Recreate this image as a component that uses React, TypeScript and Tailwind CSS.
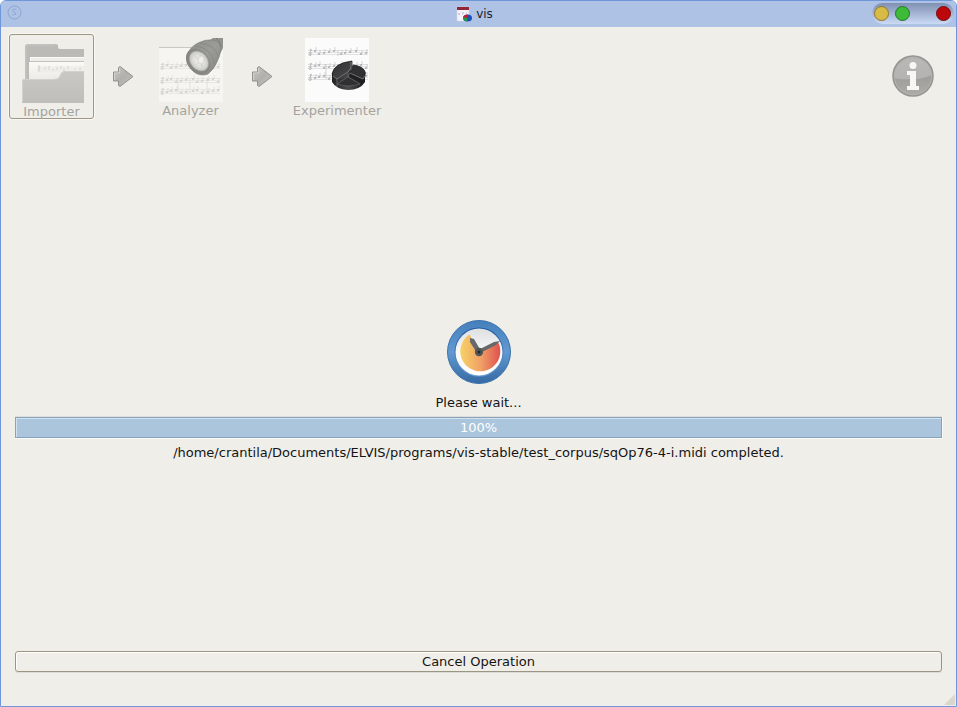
import type { ReactNode } from "react";

function AppIcon() {
  return (
    <svg width="16" height="16" viewBox="0 0 16 16" aria-hidden="true">
      <rect x="1" y="1" width="12" height="14" fill="#f4f2f8" stroke="#d5d3e0" strokeWidth=".5" />
      <rect x="1" y="1" width="12" height="3" fill="#922536" />
      <path d="M3 7v2M3 8h1M6 8h1M7 6v2M10 7h1" stroke="#b9b6c6" strokeWidth="1" />
      <ellipse cx="11.500" cy="12" rx="4.500" ry="3.500" fill="#1c50b8" />
      <path d="M11.500 12 7 11.500Q8 8.500 12 8.500z" fill="#d0182c" />
      <path d="M11.500 12 11 15.500Q7 15 7 11.500z" fill="#1e9a48" />
    </svg>
  );
}

function StaffLines({ dark }: { dark: boolean }) {
  const ink = dark ? "#77777a" : "#a3a29e";
  const notes = [10, 14, 19, 24, 29, 36, 40, 45, 51, 56, 61];
  return (
    <g opacity={dark ? 0.55 : 0.45}>
      {[12, 26, 37].map((y, row) => (
        <g key={y}>
          {[0, 2, 4].map((d) => (
            <path key={d} d={`M3 ${y + d}.5H63`} stroke={ink} strokeWidth=".35" />
          ))}
          <path
            d={`M5 ${y + 6}c2-1 0-4-1-2s3 2 2-1-1-4 0-4 0 3-2 4`}
            fill="none"
            stroke={ink}
            strokeWidth=".8"
          />
          {notes.map((x, i) => (
            <g key={x} fill={ink}>
              <ellipse cx={x} cy={y + 1 + ((i * 3 + row) % 4)} rx="1.2" ry=".9" />
              <path d={`M${x + 1} ${y + 1 + ((i * 3 + row) % 4)}v-4`} stroke={ink} strokeWidth=".5" />
            </g>
          ))}
        </g>
      ))}
      <path d="M21 26v15M33 12v6M33 26v15M50 26v15" stroke={ink} strokeWidth=".5" />
    </g>
  );
}

function FolderIcon() {
  return (
    <svg className="shrink-0" width="64" height="64" viewBox="0 0 64 64" aria-hidden="true">
      <defs>
        <linearGradient id="folderFront" x1="0" y1="0" x2="0" y2="1">
          <stop offset="0" stopColor="#c9c8c4" />
          <stop offset="1" stopColor="#bfbebb" />
        </linearGradient>
        <linearGradient id="folderPaper" x1="0" y1="0" x2="0" y2="1">
          <stop offset="0" stopColor="#fbfaf7" />
          <stop offset="1" stopColor="#e9e8e4" />
        </linearGradient>
      </defs>
      <path d="M5 42V8q0-3 3-3h28q2 0 2 2v1q0 2 3 2h23v32z" fill="#bbbab6" />
      <path d="M6 42V8q0-2 2-2h27" fill="none" stroke="#c9c8c4" />
      <path d="M10 18h54v4H10z" fill="#eeede9" />
      <path d="M10.500 22v-3.500H64" fill="none" stroke="#fcfbf9" />
      <path d="M9 23h55v20H9z" fill="url(#folderPaper)" />
      <path d="M10 22.500h54" stroke="#c7c6c2" strokeWidth=".7" />
      <path d="M17 28h47M17 30h47M17 32h47" stroke="#e0dfdb" strokeWidth=".5" />
      <path
        d="M19 26v7M18 31q3-2 1-4M25 28v3M29 27v4M33 30v2M37 28v3M41 27v3M44 29v3M48 27v3M55 29v2M60 28v3"
        fill="none"
        stroke="#d2d1cd"
        strokeWidth=".9"
      />
      <path d="M2 64V42q0-2 2-2h31q4 0 5-4t6-4h18v32z" fill="url(#folderFront)" />
      <path d="M2.500 63V42q0-1.500 2-1.500h30q5 0 6-4t6-4h17" fill="none" stroke="#d2d1cd" />
    </svg>
  );
}

function FlashlightIcon() {
  return (
    <svg className="shrink-0" width="64" height="64" viewBox="0 0 64 64" aria-hidden="true">
      <defs>
        <linearGradient id="torchBody" x1="0" y1="0" x2="1" y2="1">
          <stop offset="0" stopColor="#8c8c88" />
          <stop offset=".5" stopColor="#9b9b97" />
          <stop offset="1" stopColor="#83837f" />
        </linearGradient>
        <radialGradient id="torchLens">
          <stop offset="0" stopColor="#f1f0ed" />
          <stop offset=".6" stopColor="#dfdeda" />
          <stop offset="1" stopColor="#c4c4c0" />
        </radialGradient>
      </defs>
      <path d="M0 9h64v55H0z" fill="#f6f5f1" />
      <path d="M0 9.500h64" stroke="#c9c8c5" />
      <g transform="translate(-2 14)">
        <StaffLines dark={false} />
      </g>
      <path d="M51 2 54 0h10v10l-4 8z" fill="#92928e" />
      <path d="M57 0q4 3 5 9" fill="none" stroke="#7d7d79" />
      <path
        d="M28 17Q31 9 39 5q8-4 15-3 7 2 8 8-1 8-4 14-3 7-9 12-9 3-15-3-7-8-6-16z"
        fill="url(#torchBody)"
        stroke="#81817d"
        strokeWidth=".7"
      />
      <path d="M36 8q16 1 20 19M41 5q14 1 19 14" fill="none" stroke="#848480" strokeWidth=".7" />
      <ellipse cx="39" cy="23.500" rx="10.500" ry="14" transform="rotate(-40 39 23.500)" fill="#868682" />
      <ellipse cx="40" cy="23" rx="8.500" ry="11" transform="rotate(-40 40 23)" fill="url(#torchLens)" stroke="#a4a4a0" strokeWidth=".7" />
      <path d="m35 17 10 12M37 27l8-8M41 16l2 14" stroke="#cbcac7" strokeWidth=".7" />
      <ellipse cx="42" cy="22" rx="3" ry="4" fill="#efeeeb" stroke="#d0cfcc" strokeWidth=".7" />
    </svg>
  );
}

function ChartIcon() {
  return (
    <svg className="shrink-0" width="64" height="64" viewBox="0 0 64 64" aria-hidden="true">
      <defs>
        <linearGradient id="pieSide" x1="0" y1="0" x2="1" y2="0">
          <stop offset="0" stopColor="#222224" />
          <stop offset=".5" stopColor="#4b4b4d" />
          <stop offset="1" stopColor="#19191b" />
        </linearGradient>
        <linearGradient id="pieTop" x1="0" y1="0" x2="1" y2="1">
          <stop offset="0" stopColor="#303032" />
          <stop offset="1" stopColor="#4a4a4c" />
        </linearGradient>
      </defs>
      <rect width="64" height="64" fill="#fbfbfb" />
      <StaffLines dark />
      <path d="M27 35v9q4 7 16 8 12 0 17-8v-9L45 32z" fill="url(#pieSide)" />
      <path d="M27 36Q29 25 47 23v7l-3 4-12 7q-4-2-5-5z" fill="url(#pieTop)" stroke="#19191b" strokeWidth=".7" />
      <path d="M48 27q11 1 12.500 8-.5 4-2.500 6l-13-6 2-4z" fill="#303032" stroke="#19191b" strokeWidth=".7" />
      <path d="m45 35 13 6v5l-14-7z" fill="#202022" />
      <path d="M43 35v4l12 7q-12 4-23 0l11-7" fill="#303032" stroke="#6f6f72" strokeWidth=".6" />
      <path d="M32 41v7" stroke="#77777a" strokeWidth=".7" />
      <path d="m28 38 4 3 11-7 3-4V24M45 35l13 6 2-3" fill="none" stroke="#99999c" strokeWidth=".7" />
    </svg>
  );
}

function StepArrow() {
  return (
    <div className="flex h-[85px] w-[54px] shrink-0 items-center justify-center">
      <svg width="26" height="24" viewBox="0 0 26 24" aria-hidden="true">
        <defs>
          <linearGradient id="arrowFill" x1="0" y1="0" x2="1" y2="1">
            <stop offset="0" stopColor="#c9c8c5" />
            <stop offset=".5" stopColor="#b1b0ad" />
            <stop offset="1" stopColor="#c2c1be" />
          </linearGradient>
        </defs>
        <path
          d="M5.500 7h5V2.500l1.500-1L25 11.500 12 21.500l-1.500-1V16h-5z"
          fill="url(#arrowFill)"
          stroke="#92918e"
          strokeWidth="1"
          strokeLinejoin="round"
        />
        <path d="M6.500 15V8h5V3" fill="none" stroke="#d8d7d4" strokeWidth=".8" />
      </svg>
    </div>
  );
}

function InfoIcon() {
  return (
    <svg width="42" height="42" viewBox="0 0 42 42" aria-hidden="true">
      <defs>
        <linearGradient id="infoFill" x1="0" y1="0" x2="0" y2="1">
          <stop offset="0" stopColor="#aaa9a6" />
          <stop offset=".55" stopColor="#a09f9c" />
          <stop offset="1" stopColor="#adaca9" />
        </linearGradient>
      </defs>
      <circle cx="21" cy="21" r="20" fill="url(#infoFill)" stroke="#959491" strokeWidth="1.500" />
      <path d="M2.500 23A18.500 18.500 0 1 1 39.500 20Q29 25 18 24 8 25 2.500 23z" fill="#c6c5c2" opacity=".55" />
      <circle cx="21" cy="21" r="18.700" fill="none" stroke="#b8b7b4" strokeWidth=".7" />
      <circle cx="21" cy="10.500" r="3.500" fill="#f8f7f4" />
      <path d="M15 16h9v15h3v4H15v-4h3V20h-3z" fill="#f8f7f4" />
    </svg>
  );
}

function ClockIcon() {
  return (
    <svg width="64" height="64" viewBox="0 0 64 64" aria-hidden="true">
      <defs>
        <linearGradient id="clockRim" x1="0" y1="0" x2="0" y2="1">
          <stop offset="0" stopColor="#4480bd" />
          <stop offset=".5" stopColor="#6299d0" />
          <stop offset="1" stopColor="#3469a4" />
        </linearGradient>
        <linearGradient id="clockInner" x1="0" y1="0" x2="0" y2="1">
          <stop offset="0" stopColor="#1d57a0" />
          <stop offset="1" stopColor="#6a9ed2" />
        </linearGradient>
        <linearGradient id="clockTime" x1="0" y1="0" x2="1" y2="0">
          <stop offset="0" stopColor="#f7d264" />
          <stop offset=".5" stopColor="#f0a267" />
          <stop offset="1" stopColor="#df504f" />
        </linearGradient>
        <linearGradient id="clockFace" x1="0" y1="0" x2="0" y2="1">
          <stop offset="0" stopColor="#dedfe1" />
          <stop offset=".5" stopColor="#f8f8f9" />
          <stop offset="1" stopColor="#ffffff" />
        </linearGradient>
      </defs>
      <circle cx="32" cy="32" r="31.500" fill="url(#clockRim)" stroke="#3c73ad" />
      <circle cx="32" cy="32" r="24.500" fill="url(#clockInner)" />
      <circle cx="32" cy="32" r="23.500" fill="url(#clockFace)" />
      <path d="M32 32 51 22A20 20 0 1 1 22.500 14.500z" fill="url(#clockTime)" />
      <path d="m23 18 4 1 7 12-4 2-7-11z" fill="#65696a" />
      <path d="m31 30 16-8 6-1-4 4-16 8z" fill="#65696a" />
      <circle cx="32" cy="32" r="4.200" fill="#525657" />
      <circle cx="32" cy="32" r="1.500" fill="#242829" />
    </svg>
  );
}

function ToolButton({ label, size, children }: { label: string; size: string; children: ReactNode }) {
  return (
    <button
      disabled
      className={`flex h-[85px] shrink-0 flex-col items-center rounded-[3px] border text-[#a5a39e] ${size}`}
    >
      {children}
      <span className="text-[13px] leading-4">{label}</span>
    </button>
  );
}

function TitleBar() {
  return (
    <header className="relative flex h-[26px] shrink-0 items-center justify-center bg-[#aec2e6] pr-2">
      <svg className="absolute top-1 left-1.5" width="15" height="15" viewBox="0 0 15 15" aria-hidden="true">
        <circle cx="7.500" cy="7.500" r="6.500" fill="none" stroke="#8da6d0" />
        <path d="M9.500 4.500q-2-1-3.500 0T7 7t2 2-3.500 1" fill="none" stroke="#8da6d0" />
      </svg>
      <h1 className="flex items-center gap-1 font-['DejaVu_Sans',sans-serif] text-xs leading-4 text-[#20242b]">
        <AppIcon />
        vis
      </h1>
      <div className="absolute top-0.5 right-0.5 flex h-[21px] w-[82px] items-center rounded-full bg-linear-to-b from-[#8090b2] to-[#cbdaf5] pr-[3px] pl-0.5">
        <button aria-label="Minimize" className="size-[15px] rounded-full border border-[#8c742b] bg-[#d8bb45]" />
        <button aria-label="Maximize" className="ml-1.5 size-[15px] rounded-full border border-[#26752b] bg-[#3dba38]" />
        <button aria-label="Close" className="ml-auto size-[15px] rounded-full border border-[#760c12] bg-[#bd080b]" />
      </div>
    </header>
  );
}

export default function App() {
  return (
    <div className="bg-white font-['DejaVu_Sans',sans-serif] text-[13px] leading-[18px] text-[#141414]">
      <div className="relative flex min-h-screen flex-col overflow-hidden rounded-t-md border border-[#6f96d8] bg-[#efeee9]">
        <TitleBar />
        <nav aria-label="Steps" className="flex items-start px-2 pt-[7px]">
          <ToolButton
            label="Importer"
            size="w-[85px] gap-px pt-1 border-[#9d9784] shadow-[0_0_0_1px_#f8f7f4]"
          >
            <FolderIcon />
          </ToolButton>
          <StepArrow />
          <ToolButton label="Analyzer" size="w-[85px] gap-px pt-[3px] border-transparent">
            <FlashlightIcon />
          </ToolButton>
          <StepArrow />
          <ToolButton label="Experimenter" size="w-[100px] gap-px pt-[3px] border-transparent">
            <ChartIcon />
          </ToolButton>
          <button aria-label="About" disabled className="mt-[21px] mr-3.5 ml-auto">
            <InfoIcon />
          </button>
        </nav>
        <main className="flex grow flex-col px-3.5 pb-[34px]">
          <section className="flex grow flex-col items-center justify-center pt-3">
            <ClockIcon />
            <p className="mt-2.5">Please wait...</p>
            <div
              role="progressbar"
              aria-label="Import progress"
              aria-valuenow={100}
              aria-valuemin={0}
              aria-valuemax={100}
              className="mt-[5px] flex h-[21px] w-full items-center justify-center border border-[#87a2bb] bg-[#abc5dc] pt-px text-white shadow-[inset_1px_1px_0_#d3e2f0,0_1px_0_#fbfaf8,1px_0_0_#fbfaf8,0_-1px_0_#e0deda]"
            >
              100%
            </div>
            <p className="mt-1.5">
              /home/crantila/Documents/ELVIS/programs/vis-stable/test_corpus/sqOp76-4-i.midi completed.
            </p>
          </section>
          <button className="h-[21px] w-full rounded-[3px] border border-[#9b9683] leading-4 shadow-[inset_1px_1px_0_#fff,0_1px_0_#dddcd7]">
            Cancel Operation
          </button>
        </main>
        <svg className="absolute right-px bottom-px" width="11" height="11" viewBox="0 0 11 11" aria-hidden="true">
          <path d="M11 0v11H0z" fill="#d9d6cb" />
        </svg>
      </div>
    </div>
  );
}
